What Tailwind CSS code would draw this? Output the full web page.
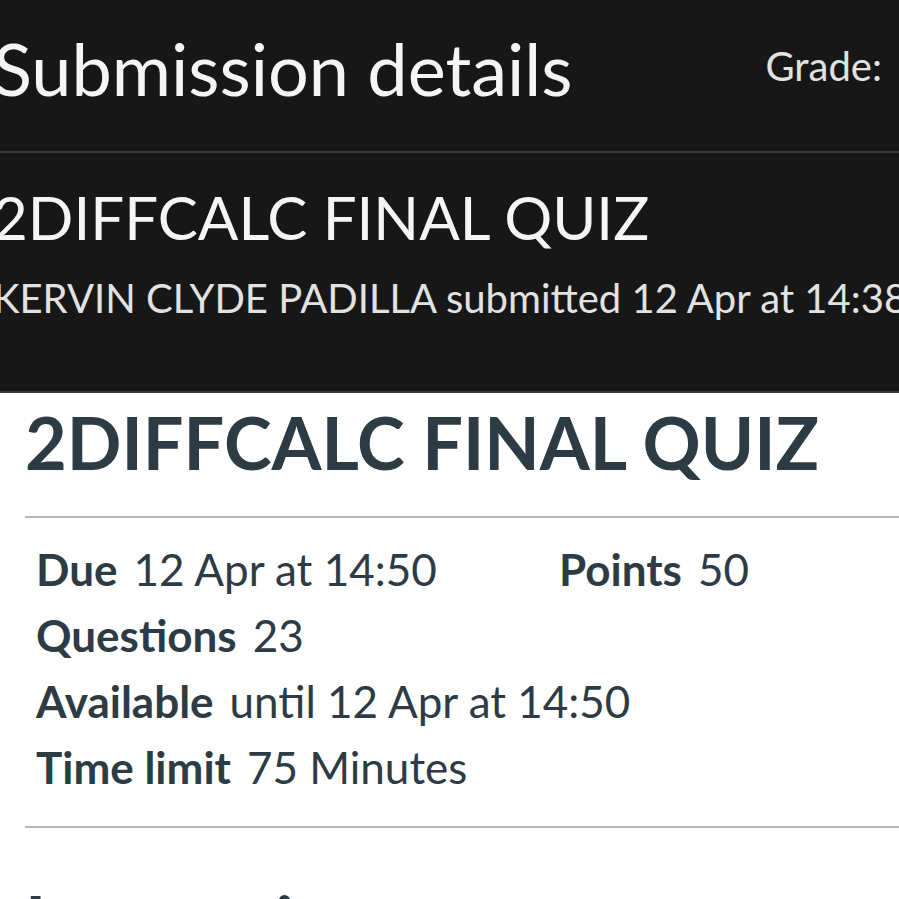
<!DOCTYPE html>
<html lang="en">
<head>
<meta charset="utf-8">
<title>Submission details</title>
<script src="https://cdn.jsdelivr.net/npm/@tailwindcss/browser@4"></script>
</head>
<body class="overflow-hidden bg-white font-['Lato',sans-serif] text-[#2d3b45]">
<div class="h-screen overflow-hidden">
<header class="border-b-2 border-[#3a3a3a] bg-[#171717] text-[#f5f5f5]">
  <div class="flex items-center justify-between border-b-2 border-[#3a3a3a] pt-5 pr-[17px] pb-[35px]">
    <h1 class="-ml-[7px] text-[72px] leading-[96px] whitespace-nowrap">Submission details</h1>
    <p class="pb-1 text-[40px] leading-[48px] text-[#e2e2e2]">Grade:</p>
  </div>
  <div class="-ml-[7px] pt-6 pb-[65px]">
    <h2 class="text-[60px] leading-[80px] whitespace-nowrap">2DIFFCALC FINAL QUIZ</h2>
    <p class="pt-[13px] text-[40px] leading-[56px] whitespace-nowrap text-[#e2e2e2]">KERVIN CLYDE PADILLA submitted 12 Apr at 14:38</p>
  </div>
</header>
<main class="pl-[25px]">
  <h1 class="pt-[3px] pb-7 text-[72px] leading-[92px] font-bold whitespace-nowrap">2DIFFCALC FINAL QUIZ</h1>
  <ul class="flex flex-wrap border-y-2 border-[#b8b8b8] pt-[18px] pb-[26px] pl-[11px] text-[44px] leading-[66px] whitespace-nowrap">
    <li class="w-[523px]"><b>Due</b><span class="ml-4">12 Apr at 14:50</span></li>
    <li><b>Points</b><span class="ml-4">50</span></li>
    <li class="w-full"><b>Questions</b><span class="ml-4">23</span></li>
    <li class="w-full"><b>Available</b><span class="ml-4">until 12 Apr at 14:50</span></li>
    <li class="w-full"><b>Time limit</b><span class="ml-4">75 Minutes</span></li>
  </ul>
  <h2 class="pt-[47px] text-[72px] leading-[92px] font-bold">Instructions</h2>
</main>
</div>
</body>
</html>
